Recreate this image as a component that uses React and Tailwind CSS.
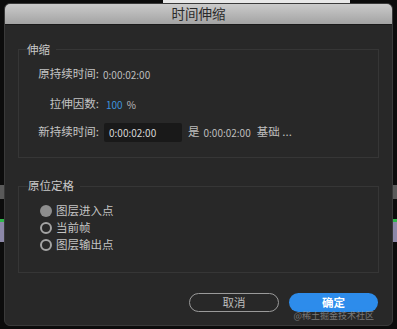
// Time stretch dialog (时间伸缩)

import React from 'react';

const font = { fontFamily: '"Noto Sans CJK SC", "Noto Sans", sans-serif' };

const Radio = ({ checked, label }) => (
    <div className="flex items-center h-[17px]">
        {checked ? (
            <span className="w-[12px] h-[12px] rounded-full bg-[#8e8e8e]"></span>
        ) : (
            <span className="w-[12px] h-[12px] rounded-full border-[2px] border-[#a4a4a4]"></span>
        )}
        <span className="ml-[4px] text-[11.5px] text-[#c4c4c4]">{label}</span>
    </div>
);

const TimeStretchDialog = () => {
    return (
        <div className="w-[397px] h-[329px] bg-[#0c0c0c] relative overflow-hidden" style={font}>
            {/* background bits behind the dialog */}
            <div className="absolute left-[163px] top-0 w-[187px] h-[3px] bg-[#e8e8e8]"></div>
            <div className="absolute left-0 top-[185px] w-[4px] h-[14px] bg-[#5a5a5a]"></div>
            <div className="absolute left-0 top-[219px] w-[4px] h-[3px] bg-[#2fb84a]"></div>
            <div className="absolute left-0 top-[222px] w-[4px] h-[20px] bg-[#8c88a8]"></div>
            <div className="absolute right-0 top-[185px] w-[4px] h-[14px] bg-[#5a5a5a]"></div>
            <div className="absolute right-0 top-[219px] w-[4px] h-[3px] bg-[#2fb84a]"></div>
            <div className="absolute right-0 top-[222px] w-[4px] h-[20px] bg-[#8c88a8]"></div>

            {/* Dialog */}
            <div className="absolute left-[4px] top-[3px] w-[389px] h-[323px] rounded-[6px] bg-[#282828] border border-[#3a3a3a] overflow-hidden flex flex-col">
                {/* Title bar */}
                <div className="h-[21px] flex items-center justify-center bg-gradient-to-b from-[#cbcbcb] to-[#a3a3a3] border-b border-[#1a1a1a]">
                    <span className="text-[13.5px] text-[#2a2a2a] leading-none">时间伸缩</span>
                </div>

                <div className="px-[13px]">
                    {/* 伸缩 group */}
                    <div className="mt-[24px] border border-[#363636] h-[109px]">
                        <div className="-mt-[8px] ml-[8px] flex">
                            <span className="text-[11.5px] text-[#c8c8c8] bg-[#282828] pr-[6px] leading-[14px]">伸缩</span>
                        </div>
                        <div className="mt-[10px] flex items-center h-[16px] text-[11.5px]">
                            <span className="w-[80px] text-right text-[#c4c4c4]">原持续时间:</span>
                            <span className="ml-[4px] text-[10px] text-[#bdbdbd]">0:00:02:00</span>
                        </div>
                        <div className="mt-[14px] flex items-center h-[16px] text-[11.5px]">
                            <span className="w-[80px] text-right text-[#c4c4c4]">拉伸因数:</span>
                            <span className="ml-[7px] text-[10px] text-[#3d92dc]">100</span>
                            <span className="ml-[4px] text-[10px] text-[#bdbdbd]">%</span>
                        </div>
                        <div className="mt-[10px] flex items-center h-[20px] text-[11.5px]">
                            <span className="w-[80px] text-right text-[#c4c4c4]">新持续时间:</span>
                            <span className="ml-[5px] w-[78px] h-[19px] bg-[#191919] rounded-[2px] flex items-center pl-[5px] text-[10px] text-[#d6d6d6]">0:00:02:00</span>
                            <span className="ml-[6px] text-[#bdbdbd]">是</span>
                            <span className="ml-[4px] text-[10px] text-[#bdbdbd]">0:00:02:00</span>
                            <span className="ml-[6px] text-[#bdbdbd]">基础 ...</span>
                        </div>
                    </div>

                    {/* 原位定格 group */}
                    <div className="mt-[28px] border border-[#363636] h-[87px]">
                        <div className="-mt-[9px] ml-[9px] flex">
                            <span className="text-[11.5px] text-[#c8c8c8] bg-[#282828] pr-[6px] leading-[14px]">原位定格</span>
                        </div>
                        <div className="mt-[10px] ml-[21px] flex flex-col">
                            <Radio checked label="图层进入点" />
                            <Radio label="当前帧" />
                            <Radio label="图层输出点" />
                        </div>
                    </div>

                    {/* Buttons */}
                    <div className="mt-[20px] flex justify-end gap-[10px] pr-[1px]">
                        <button className="w-[90px] h-[19px] rounded-full border border-[#9a9a9a] text-[11.5px] text-[#bcbcbc] flex items-center justify-center">取消</button>
                        <button className="w-[89px] h-[19px] rounded-full bg-[#2d8ceb] text-[11.5px] font-bold text-white flex items-center justify-center">确定</button>
                    </div>
                    <div className="flex justify-end pr-[5px] -mt-[2px]">
                        <span className="text-[9px] text-[#9a9a9a] opacity-70 leading-[12px]">@稀土掘金技术社区</span>
                    </div>
                </div>
            </div>
        </div>
    );
};

export default function App() {
    return <TimeStretchDialog />;
}
